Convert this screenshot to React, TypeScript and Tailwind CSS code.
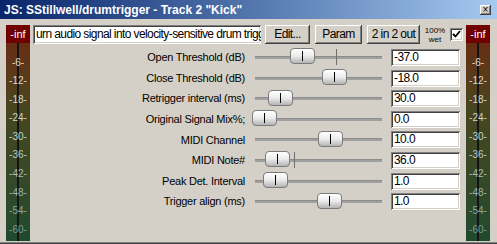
const params = [
  { label: 'Open Threshold (dB)', value: '-37.0', thumb: 35, tick: 81 },
  { label: 'Close Threshold (dB)', value: '-18.0', thumb: 67 },
  { label: 'Retrigger interval (ms)', value: '30.0', thumb: 13 },
  { label: 'Original Signal Mix%;', value: '0.0', thumb: -3 },
  { label: 'MIDI Channel', value: '10.0', thumb: 63 },
  { label: 'MIDI Note#', value: '36.0', thumb: 10, tick: 39 },
  { label: 'Peak Det. Interval', value: '1.0', thumb: 8 },
  { label: 'Trigger align (ms)', value: '1.0', thumb: 62 },
]

const marks = [
  { t: '-6-', c: 'text-[#e8dcd0]' },
  { t: '-12-', c: 'text-[#e0d8c8]' },
  { t: '-18-', c: 'text-[#d8d8c8]' },
  { t: '-24-', c: 'text-[#d0d4c4]' },
  { t: '-30-', c: 'text-[#c8d0c0]' },
  { t: '-36-', c: 'text-[#c0c8bc]' },
  { t: '-42-', c: 'text-[#b0bcb0]' },
  { t: '-48-', c: 'text-[#a0b0a4]' },
  { t: '-54-', c: 'text-[#90a498]' },
  { t: '-60-', c: 'text-[#80968a]' },
]

const raised =
  'bg-[#d4d0c8] shadow-[inset_-1px_-1px_#404040,inset_1px_1px_#ffffff,inset_-2px_-2px_#808080,inset_2px_2px_#d4d0c8]'
const sunken =
  'bg-white shadow-[inset_1px_1px_#808080,inset_-1px_-1px_#ffffff,inset_2px_2px_#404040,inset_-2px_-2px_#d4d0c8]'

function Meter() {
  return (
    <div className="relative w-[24px] h-[216px] flex flex-col bg-gradient-to-b from-[#6e2410] via-[#464620] via-40% to-[#1e4a2e]">
      <div className="h-[18px] bg-[#700000] text-white text-[11px] leading-[18px] text-center">-inf</div>
      <div className="absolute left-[11px] top-[18px] bottom-0 w-[2px] bg-[#141414]" />
      <div className="relative flex flex-col pt-[10.5px]">
        {marks.map((m) => (
          <div key={m.t} className={`h-[18.6px] leading-[18.6px] text-center text-[10px] ${m.c}`}>
            {m.t}
          </div>
        ))}
      </div>
    </div>
  )
}

export default function App() {
  return (
    <div
      className="w-[497px] h-[244px] bg-[#d4d0c8] flex flex-col overflow-hidden text-black shadow-[inset_0_-1px_#404040,inset_0_-2px_#808080]"
      style={{ fontFamily: '"Liberation Sans", Arial, sans-serif' }}
    >
      {/* title bar */}
      <div className="h-[19px] flex items-center justify-between pl-[4px] pr-[6px] bg-gradient-to-r from-[#0a246a] to-[#a6caf0]">
        <span className="text-white font-bold text-[12px] leading-none whitespace-nowrap">
          JS: SStillwell/drumtrigger - Track 2 "Kick"
        </span>
        <div className={`w-[11px] h-[10px] ${raised} flex items-center justify-center text-[10px] leading-none`}>
          ×
        </div>
      </div>

      <div className="flex items-start pt-[6px] pl-[6px]">
        <Meter />

        <div className="w-[436px] flex flex-col">
          {/* top row */}
          <div className="flex items-center h-[19px] pl-[3px] text-[12px] tracking-[-0.6px]">
            <div className={`w-[228px] h-[19px] ${sunken} overflow-hidden whitespace-nowrap pl-[3px] leading-[19px]`}>
              urn audio signal into velocity-sensitive drum trigg
            </div>
            <div className={`ml-[4px] w-[45px] h-[19px] ${raised} leading-[19px] text-center`}>Edit...</div>
            <div className={`ml-[5px] w-[47px] h-[19px] ${raised} leading-[19px] text-center`}>Param</div>
            <div className={`ml-[5px] w-[53px] h-[19px] ${raised} leading-[19px] text-center whitespace-nowrap`}>2 in 2 out</div>
            <div className="ml-[3px] w-[24px] flex flex-col items-center text-[8px] leading-[9px] tracking-normal">
              <span>100%</span>
              <span>wet</span>
            </div>
            <div className={`ml-[3px] w-[13px] h-[13px] ${sunken} flex items-center justify-center`}>
              <svg width="9" height="9" viewBox="0 0 9 9">
                <path d="M1 4 L3.5 6.5 L8 1" fill="none" stroke="#000" strokeWidth="1.8" />
              </svg>
            </div>
          </div>

          {/* parameter rows */}
          <div className="flex flex-col mt-[3.2px]">
            {params.map((p) => (
              <div key={p.label} className="flex items-center h-[20.6px]">
                <div className="w-[215px] text-right text-[11px] tracking-[-0.25px] whitespace-nowrap">{p.label}</div>
                <div className="relative ml-[10px] w-[127px] h-[20px] flex items-center">
                  <div className="w-full h-[3px] bg-[#a0a0a0] border-t border-[#8c8c8c]" />
                  {p.tick !== undefined && (
                    <div className="absolute top-[2px] h-[16px] w-px bg-[#707070]" style={{ left: p.tick }} />
                  )}
                  <div
                    className="absolute top-[1px] w-[25px] h-[16px] rounded-[4px] border border-[#7c7c7c] bg-gradient-to-b from-white via-[#ececec] to-[#b4b4b4] flex items-center justify-center"
                    style={{ left: p.thumb }}
                  >
                    <div className="w-px h-[10px] bg-black" />
                  </div>
                </div>
                <div className={`ml-[9px] w-[69px] h-[17px] ${sunken} pl-[3px] text-[12px] tracking-[-0.6px] leading-[17px]`}>
                  {p.value}
                </div>
              </div>
            ))}
          </div>
        </div>

        <Meter />
      </div>
    </div>
  )
}
